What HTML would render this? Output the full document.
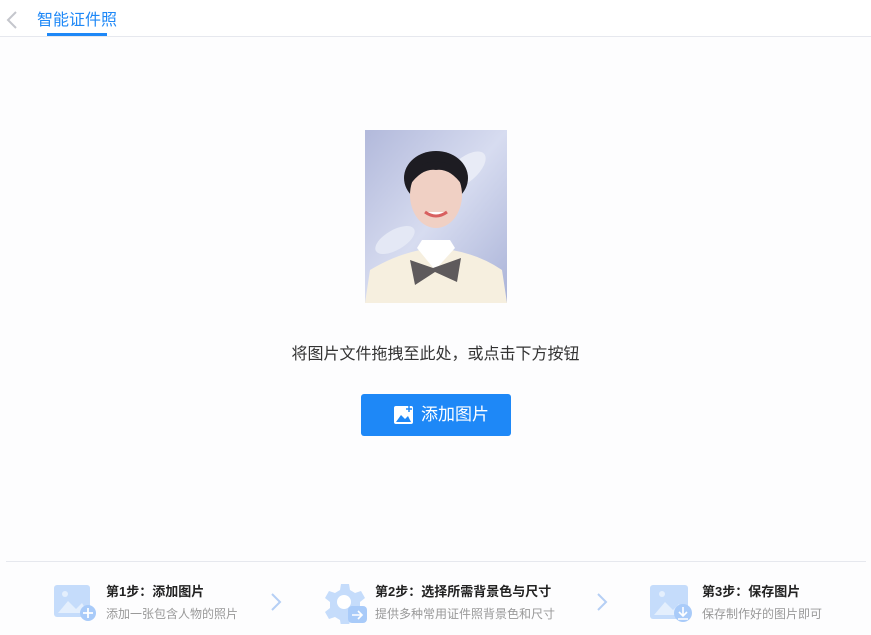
<!DOCTYPE html>
<html><head><meta charset="utf-8"><style>
*{margin:0;padding:0;box-sizing:border-box}
body{width:871px;height:635px;background:#fdfdfe;font-family:"Liberation Sans","Noto Sans CJK SC",sans-serif;position:relative;overflow:hidden}
.top{position:absolute;left:0;top:0;width:871px;height:37px;background:#fff;border-bottom:1px solid #e6e8ee}
.tab{position:absolute;left:37px;top:6px;font-size:16px;color:#1e88f7}
.ul{position:absolute;left:47px;top:33px;width:60px;height:3px;background:#1e88f7}
.hint{position:absolute;left:0;width:871px;top:340px;text-align:center;font-size:16px;color:#333}
.btn{position:absolute;left:361px;top:394px;width:150px;height:42px;background:#1e88f7;border-radius:3px;color:#fff;font-size:17px;line-height:42px;padding-left:60px}
.btn svg{position:absolute;left:33px;top:11px}
.sep{position:absolute;left:6px;top:561px;width:860px;height:1px;background:#e6e8ee}
.st{position:absolute;top:584px}
.st b{display:block;font-size:13px;color:#222;font-weight:bold;line-height:16px}
.st span{display:block;font-size:12px;color:#999;margin-top:5px}
.ar{position:absolute;top:592px}
</style></head><body>
<div class="top">
<svg style="position:absolute;left:6px;top:11px" width="12" height="18"><path d="M10 1 L2 9 L10 17" stroke="#c4c6cc" stroke-width="2" fill="none"/></svg>
<div class="tab">智能证件照</div><div class="ul"></div></div>
<svg style="position:absolute;left:365px;top:130px" width="142" height="173">
<defs><linearGradient id="g" x1="0" y1="0" x2="1" y2="1"><stop offset="0" stop-color="#b2b9db"/><stop offset=".5" stop-color="#d7dcf0"/><stop offset="1" stop-color="#aab3d8"/></linearGradient></defs>
<rect width="142" height="173" fill="url(#g)"/>
<ellipse cx="100" cy="40" rx="25" ry="12" fill="#e8ebf6" transform="rotate(-40 100 40)"/>
<ellipse cx="30" cy="110" rx="22" ry="10" fill="#e4e8f5" transform="rotate(-30 30 110)"/>
<path d="M0 173 L5 140 Q30 125 55 120 L87 120 Q115 125 137 140 L142 173Z" fill="#f6efdf"/>
<path d="M52 118 L70 140 L90 118 L85 110 L57 110Z" fill="#fff"/>
<ellipse cx="71" cy="48" rx="32" ry="27" fill="#1d1c22"/>
<ellipse cx="71" cy="65" rx="26" ry="33" fill="#f0d0c4"/>
<path d="M45 55 Q50 30 71 32 Q92 30 97 55 Q85 38 71 40 Q57 38 45 55Z" fill="#1d1c22"/>
<path d="M60 82 Q71 90 82 82" stroke="#d86060" stroke-width="3" fill="#fff"/>
<path d="M45 130 L68 138 L96 128 L92 152 L70 142 L50 155Z" fill="#5e5a5c"/>
</svg>
<div class="hint">将图片文件拖拽至此处，或点击下方按钮</div>
<div class="btn"><svg width="20" height="20"><rect x="0" y="1" width="19" height="18" rx="2" fill="#fff"/><path d="M2 17 L7 10 L11 14 L14 11 L17 17Z" fill="#1e88f7"/><path d="M15 1 v6 M12 4 h6" stroke="#1e88f7" stroke-width="1.5"/></svg>添加图片</div>
<div class="sep"></div>
<svg style="position:absolute;left:54px;top:585px" width="42" height="36"><rect x="0" y="0" width="36" height="32" rx="3" fill="#c5dcfb"/><path d="M4 28 L14 16 L22 24 L28 18 L34 28Z" fill="#e4effd"/><circle cx="11" cy="9" r="3" fill="#e4effd"/><circle cx="34" cy="28" r="8" fill="#a9cbf9"/><path d="M34 23 v10 M29 28 h10" stroke="#fff" stroke-width="1.8"/></svg>
<div class="st" style="left:106px"><b>第1步：添加图片</b><span>添加一张包含人物的照片</span></div>
<svg class="ar" style="left:270px" width="12" height="20"><path d="M2 2 L10 10 L2 18" stroke="#b5cff5" stroke-width="2" fill="none"/></svg>
<svg style="position:absolute;left:323px;top:584px" width="44" height="40"><path d="M18 0 h8 l1 6 l5 3 l6 -2 l4 7 l-5 4 v6 l5 4 l-4 7 l-6 -2 l-5 3 l-1 6 h-8 l-1 -6 l-5 -3 l-6 2 l-4 -7 l5 -4 v-6 l-5 -4 l4 -7 l6 2 l5 -3Z" fill="#c5dcfb"/><circle cx="21" cy="18" r="7" fill="#fff"/><rect x="25" y="22" width="19" height="17" rx="4" fill="#a9cbf9"/><path d="M29 31 h10 M35 27 l4 4 l-4 4" stroke="#fff" stroke-width="1.6" fill="none"/></svg>
<div class="st" style="left:375px"><b>第2步：选择所需背景色与尺寸</b><span>提供多种常用证件照背景色和尺寸</span></div>
<svg class="ar" style="left:596px" width="12" height="20"><path d="M2 2 L10 10 L2 18" stroke="#b5cff5" stroke-width="2" fill="none"/></svg>
<svg style="position:absolute;left:650px;top:585px" width="44" height="38"><rect x="0" y="0" width="38" height="34" rx="3" fill="#c5dcfb"/><path d="M4 30 L15 17 L23 25 L29 19 L35 30Z" fill="#e4effd"/><circle cx="12" cy="9" r="3" fill="#e4effd"/><circle cx="33" cy="28" r="9" fill="#a9cbf9"/><path d="M33 22 v8 M29 27 l4 4 l4 -4 M28 34 h10" stroke="#fff" stroke-width="1.6" fill="none"/></svg>
<div class="st" style="left:702px"><b>第3步：保存图片</b><span>保存制作好的图片即可</span></div>
</body></html>
